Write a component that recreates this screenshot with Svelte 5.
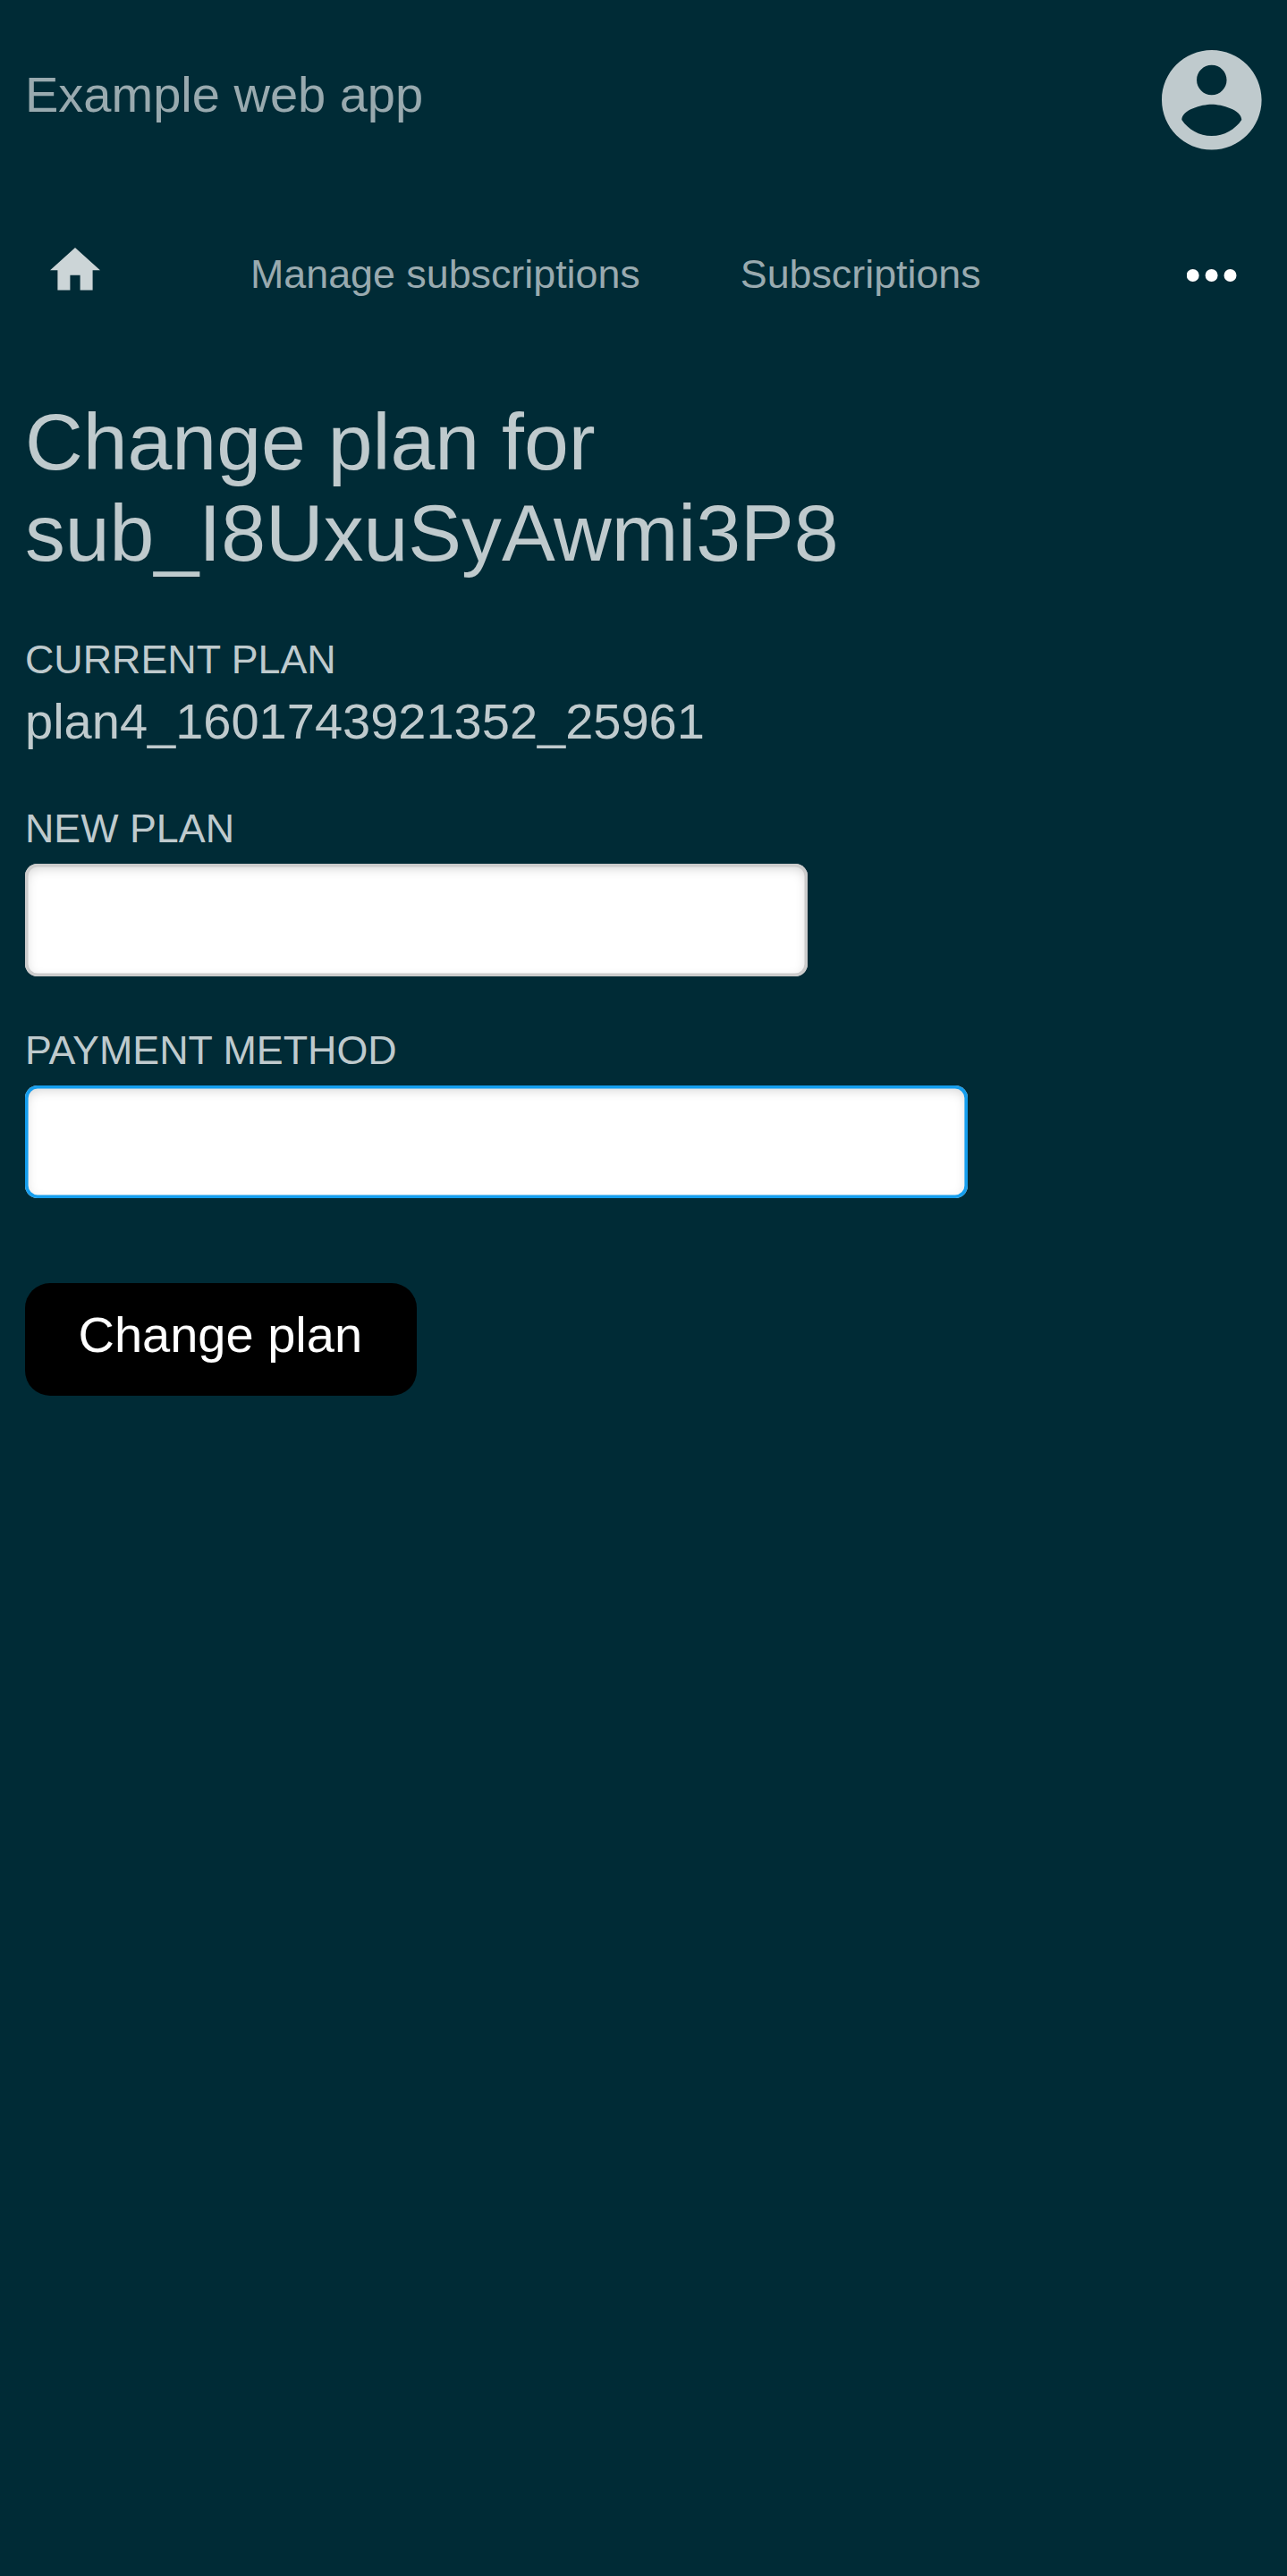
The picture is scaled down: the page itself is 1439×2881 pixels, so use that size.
<script>
  const links = ['Manage subscriptions', 'Subscriptions'];
</script>

<div class="page">
  <header>
    <a class="brand" href="#home">Example web app</a>
    <svg class="avatar" viewBox="2 2 20 20"><path d="M12 2C6.480 2 2 6.480 2 12s4.480 10 10 10 10-4.480 10-10S17.520 2 12 2zm0 3c1.660 0 3 1.340 3 3s-1.340 3-3 3-3-1.340-3-3 1.340-3 3-3zm0 14.200c-2.500 0-4.710-1.280-6-3.220.03-1.990 4-3.080 6-3.080 1.990 0 5.970 1.090 6 3.080-1.290 1.940-3.500 3.220-6 3.220z"/></svg>
  </header>
  <nav>
    <svg class="home" viewBox="2 3 20 17"><path d="M10 20v-6h4v6h5v-8h3L12 3 2 12h3v8z"/></svg>
    {#each links as link}<a href="#section">{link}</a>{/each}
    <svg class="dots" viewBox="0 0 56 14"><circle cx="6.700" cy="7" r="7"/><circle cx="27.600" cy="7" r="7"/><circle cx="48.500" cy="7" r="7"/></svg>
  </nav>
  <main>
    <h1>Change plan for<br>sub_I8UxuSyAwmi3P8</h1>
    <div class="label current">CURRENT PLAN</div>
    <div class="value">plan4_1601743921352_25961</div>
    <label class="label new" for="plan">NEW PLAN</label>
    <input id="plan" class="plan">
    <label class="label payment" for="method">PAYMENT METHOD</label>
    <input id="method" class="method">
    <button>Change plan</button>
  </main>
</div>

<style>
  :global(body) { background: #002b36; }
  .page { box-sizing: border-box; min-height: 2881px; padding: 56px 28px 0; font: 56px/70px "Liberation Sans", sans-serif; color: #bfcacd; background: #002b36; }
  header { display: flex; justify-content: space-between; height: 112px; }
  a { color: #99aaaf; text-decoration: none; }
  .brand { margin-top: 15px; }
  .avatar { width: 111.600px; height: 111.600px; margin-right: 0.500px; fill: #bfcacd; }
  nav { display: flex; align-items: center; height: 78px; margin-top: 100px; padding: 0 28px; font-size: 44.8px; }
  nav a { margin: 0 112px 2px 0; }
  .home { align-self: flex-start; width: 56px; height: 47.6px; margin: 9px 168px 0 0; fill: #ccd5d7; }
  .dots { width: 56px; height: 14px; margin: 2px 0 0 auto; fill: white; }
  main { padding-top: 97px; }
  h1 { margin: 0; font-size: 89.6px; line-height: 102px; font-weight: normal; }
  .label { display: block; font-size: 44.8px; line-height: 56px; }
  .current { margin-top: 62px; }
  .value { margin-top: 7px; }
  .new { margin-top: 56px; }
  input { display: block; box-sizing: border-box; height: 126px; margin: 12px 0 0; padding: 0 28px; border: 0; border-radius: 14px; background: white; outline: none; box-shadow: inset 0 0 0 3.500px #ccc, inset 0 4px 14px #0003; }
  .plan { width: 875px; }
  .payment { margin-top: 54.3px; }
  .method { width: 1053.700px; box-shadow: inset 0 0 0 3.600px #159eee, inset 0 4px 14px #0003; }
  button { display: block; width: 437.500px; height: 126px; margin-top: 94.700px; padding: 0 1px 10px 0; border: 0; border-radius: 28px; background: black; color: white; font: inherit; }
</style>
